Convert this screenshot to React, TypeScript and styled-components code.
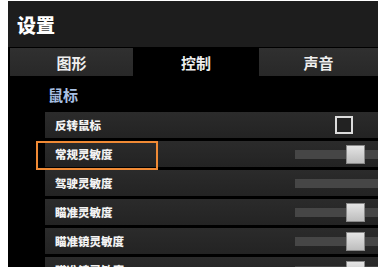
import * as React from "react";
import styled, { createGlobalStyle } from "styled-components";

const GlobalStyle = createGlobalStyle`
    body {
        margin: 0;
        background: #ffffff;
        font-family: "Noto Sans CJK SC", "Noto Sans", sans-serif;
    }
`;

const Frame = styled.div`
    position: relative;
    margin: 1px 0 0 8px;
    height: 266px;
    background: #000000;
    overflow: hidden;
`;

const Header = styled.div`
    height: 46px;
    display: flex;
    align-items: center;
    padding-left: 9px;
    background: #1d1d1d;
    color: #ffffff;
    font-size: 19px;
    font-weight: 900;
`;

const TabBar = styled.div`
    display: grid;
    grid-template-columns: 123px 126px 1fr;
    height: 28px;
    margin-top: 1px;
    padding-left: 2px;
`;

const Tab = styled.div<{ $active?: boolean }>`
    display: flex;
    align-items: center;
    justify-content: center;
    background: ${(p) => (p.$active ? "#000000" : "linear-gradient(#303030, #282828)")};
    color: #eeeeee;
    font-size: 15px;
    font-weight: 700;
`;

const Section = styled.div`
    padding-left: 37px;
`;

const Heading = styled.div`
    height: 36px;
    padding: 10px 0 0 3px;
    box-sizing: border-box;
    color: #a9c0e4;
    font-size: 15px;
    font-weight: 700;
    line-height: 18px;
`;

const RowList = styled.div`
    display: flex;
    flex-direction: column;
    gap: 3px;
`;

const Row = styled.div`
    display: flex;
    align-items: center;
    justify-content: space-between;
    height: 26px;
    padding-left: 10px;
    background: linear-gradient(#2b2b2b, #232323);
    color: #f2f2f2;
    font-size: 11.5px;
    font-weight: 900;
`;

const Checkbox = styled.div`
    width: 14px;
    height: 14px;
    margin-right: 25px;
    border: 2px solid #dcdcdc;
    background: #222222;
`;

const Track = styled.div`
    position: relative;
    width: 83px;
    height: 9px;
    background: #464646;
`;

const Thumb = styled.div`
    position: absolute;
    top: -5px;
    left: 51px;
    width: 17px;
    height: 17px;
    border: 1px solid #8a8a8a;
    background: linear-gradient(#e4e4e4, #bdbdbd);
`;

const Highlight = styled.div`
    position: absolute;
    left: 28px;
    top: 140px;
    width: 118px;
    height: 25px;
    border: 2px solid #f08a35;
`;

type Control = "check" | "slider" | "sliderMax";

const rows: { label: string; control: Control }[] = [
    { label: "反转鼠标", control: "check" },
    { label: "常规灵敏度", control: "slider" },
    { label: "驾驶灵敏度", control: "sliderMax" },
    { label: "瞄准灵敏度", control: "slider" },
    { label: "瞄准镜灵敏度", control: "slider" },
    { label: "瞄准镜灵敏度", control: "slider" },
];

export default function App(): JSX.Element {
    return (
        <>
            <GlobalStyle />
            <Frame>
                <Header>设置</Header>
                <TabBar>
                    <Tab>图形</Tab>
                    <Tab $active>控制</Tab>
                    <Tab>声音</Tab>
                </TabBar>
                <Section>
                    <Heading>鼠标</Heading>
                    <RowList>
                        {rows.map((row, i) => (
                            <Row key={i}>
                                <span>{row.label}</span>
                                {row.control === "check" ? (
                                    <Checkbox />
                                ) : (
                                    <Track>{row.control === "slider" && <Thumb />}</Track>
                                )}
                            </Row>
                        ))}
                    </RowList>
                </Section>
                <Highlight />
            </Frame>
        </>
    );
}
